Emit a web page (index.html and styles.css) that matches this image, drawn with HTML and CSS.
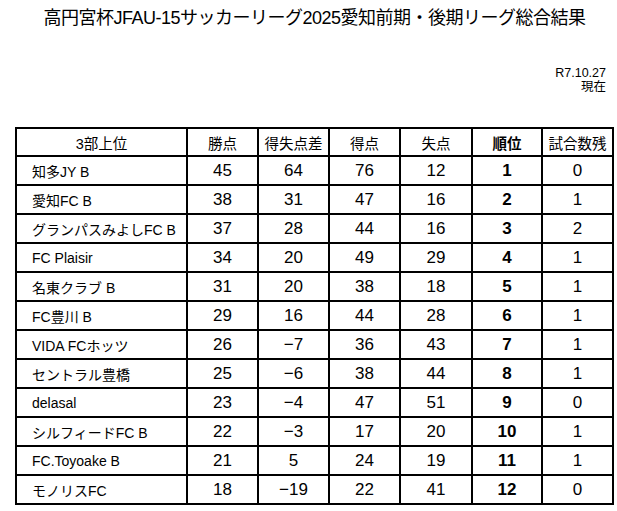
FILE: index.html
```html
<!DOCTYPE html>
<html lang="ja">
<head>
<meta charset="utf-8">
<link rel="stylesheet" href="styles.css">
</head>
<body>
<div class="page">
  <h1 class="title">高円宮杯JFAU-15サッカーリーグ2025愛知前期・後期リーグ総合結果</h1>
  <div class="date">
    <div>R7.10.27</div>
    <div>現在</div>
  </div>
  <table class="standings">
    <colgroup>
      <col class="c-name"><col class="c-num"><col class="c-num"><col class="c-num"><col class="c-num5"><col class="c-num6"><col class="c-num">
    </colgroup>
    <thead>
      <tr><th>3部上位</th><th>勝点</th><th>得失点差</th><th>得点</th><th>失点</th><th class="rank">順位</th><th>試合数残</th></tr>
    </thead>
    <tbody>
      <tr><td class="name">知多JY B</td><td>45</td><td>64</td><td>76</td><td>12</td><td class="rank">1</td><td>0</td></tr>
      <tr><td class="name">愛知FC B</td><td>38</td><td>31</td><td>47</td><td>16</td><td class="rank">2</td><td>1</td></tr>
      <tr><td class="name">グランパスみよしFC B</td><td>37</td><td>28</td><td>44</td><td>16</td><td class="rank">3</td><td>2</td></tr>
      <tr><td class="name">FC Plaisir</td><td>34</td><td>20</td><td>49</td><td>29</td><td class="rank">4</td><td>1</td></tr>
      <tr><td class="name">名東クラブ B</td><td>31</td><td>20</td><td>38</td><td>18</td><td class="rank">5</td><td>1</td></tr>
      <tr><td class="name">FC豊川 B</td><td>29</td><td>16</td><td>44</td><td>28</td><td class="rank">6</td><td>1</td></tr>
      <tr><td class="name">VIDA FCホッツ</td><td>26</td><td>−7</td><td>36</td><td>43</td><td class="rank">7</td><td>1</td></tr>
      <tr><td class="name">セントラル豊橋</td><td>25</td><td>−6</td><td>38</td><td>44</td><td class="rank">8</td><td>1</td></tr>
      <tr><td class="name">delasal</td><td>23</td><td>−4</td><td>47</td><td>51</td><td class="rank">9</td><td>0</td></tr>
      <tr><td class="name">シルフィードFC B</td><td>22</td><td>−3</td><td>17</td><td>20</td><td class="rank">10</td><td>1</td></tr>
      <tr><td class="name">FC.Toyoake B</td><td>21</td><td>5</td><td>24</td><td>19</td><td class="rank">11</td><td>1</td></tr>
      <tr><td class="name">モノリスFC</td><td>18</td><td>−19</td><td>22</td><td>41</td><td class="rank">12</td><td>0</td></tr>
    </tbody>
  </table>
</div>
</body>
</html>
```

FILE: styles.css
```css
html, body {
  margin: 0;
  padding: 0;
  background: #fff;
}

body {
  font-family: "Liberation Sans", "Noto Sans CJK JP", Arial, sans-serif;
  color: #000;
}

.page {
  width: 597px;
  margin-left: 15px;
  padding-top: 7px;
}

.title {
  margin: 0;
  font-size: 18px;
  font-weight: normal;
  line-height: 22px;
  letter-spacing: -0.5px;
  text-align: center;
  padding-left: 2px;
}

.date {
  margin-top: 37px;
  padding-right: 6px;
  text-align: right;
  font-size: 12.5px;
  line-height: 14px;
}

.standings {
  margin-top: 33px;
  border-collapse: collapse;
  table-layout: fixed;
  width: 597px;
  border: 2px solid #000;
}

.c-name { width: 171px; }
.c-num { width: 71px; }
.c-num5 { width: 72px; }
.c-num6 { width: 70px; }

.standings th,
.standings td {
  border: 2px solid #000;
  padding: 0;
  text-align: center;
  vertical-align: middle;
  white-space: nowrap;
}

.standings th {
  height: 26px;
  font-size: 14.5px;
  font-weight: normal;
}

.standings th.rank {
  font-weight: bold;
}

.standings td {
  height: 27px;
  font-size: 17px;
}

.standings td.name {
  text-align: left;
  padding-left: 15px;
  font-size: 14px;
}

.standings td.rank {
  font-weight: bold;
}
```
